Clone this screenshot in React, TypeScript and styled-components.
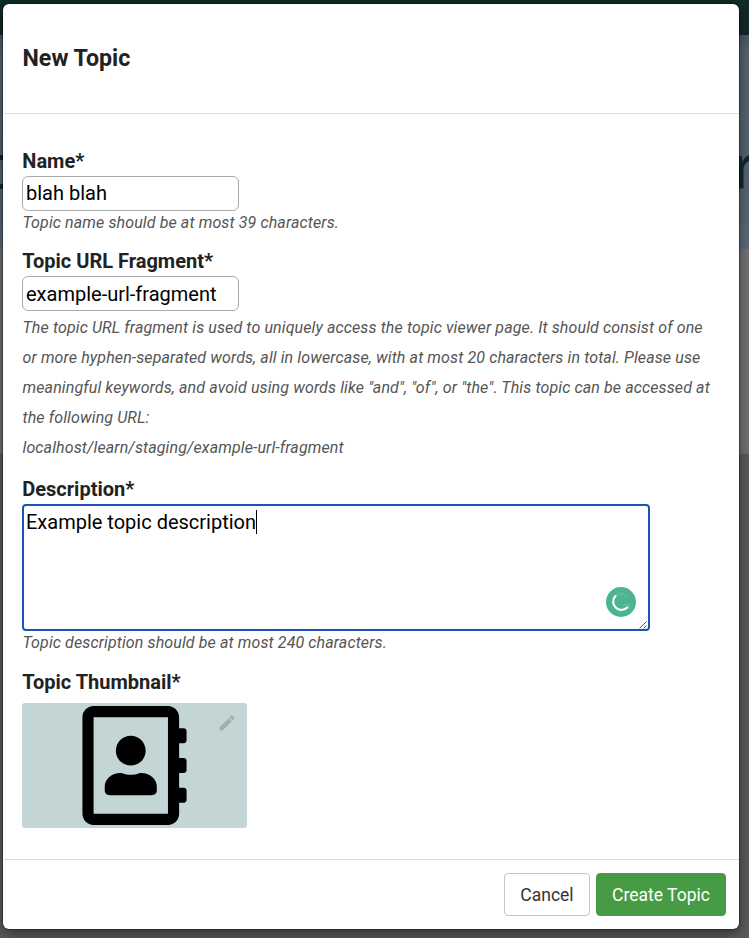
import React from "react";
import styled, { createGlobalStyle } from "styled-components";
import { FaRegAddressBook } from "react-icons/fa";
import { MdEdit } from "react-icons/md";

const GlobalStyle = createGlobalStyle`
  * { box-sizing: border-box; }
  body { margin: 0; font-family: Roboto, "Liberation Sans", sans-serif; color: #222; overflow: hidden; }
`;

const Page = styled.div`
  position: relative;
  height: 938px;
  overflow: hidden;
  background: #5f5d5b;
`;

const Backdrop = styled.div`
  position: absolute;
  inset: 0;
  display: flex;
  flex-direction: column;
`;

const NavStrip = styled.div`
  height: 35px;
  background: #102b29;
`;

const Hero = styled.div`
  height: 214px;
  padding-top: 120px;
  display: flex;
  justify-content: space-between;
  align-items: flex-start;
  background: linear-gradient(#4c5761, #5a6670 8%, #586570 60%, #5e6c7b);
`;

const HeroGlyph = styled.svg`
  display: block;
  width: 12px;
  height: 34px;
`;

const ContentBand = styled.div`
  height: 205px;
  background: #747474;
`;

const Dialog = styled.div`
  position: relative;
  display: flex;
  flex-direction: column;
  width: 736px;
  height: 925px;
  margin: 4px 0 0 3px;
  border-radius: 6px;
  background: #fff;
  box-shadow: 0 0 0 1px rgba(0, 0, 0, 0.3), 0 5px 15px rgba(0, 0, 0, 0.5);
  float: left;
`;

const Header = styled.header`
  height: 110px;
  margin-left: 1px;
  padding: 38px 18.5px 0;
  border-bottom: 1px solid #dddedd;
`;

const Title = styled.h1`
  margin: 0;
  font-size: 23.2px;
  line-height: 32px;
  font-weight: 700;
`;

const Body = styled.main`
  flex: 1;
  padding: 35px 19px 0;
`;

const Field = styled.section<{ $height: number }>`
  height: ${(p) => p.$height}px;
`;

const Label = styled.label`
  display: block;
  height: 27px;
  padding-left: 0.3px;
  font-size: 20px;
  line-height: 25px;
  font-weight: 700;
`;

const TextInput = styled.input<{ $lift?: boolean }>`
  display: block;
  width: 217px;
  height: 35px;
  padding: 0 3px ${(p) => (p.$lift ? 2 : 0)}px;
  border: 1px solid #aaa;
  border-radius: 6px;
  outline: none;
  background: #fff;
  color: #000;
  font: 400 20px Roboto, sans-serif;
`;

const Hint = styled.p<{ $line?: number; $top?: number }>`
  margin: ${(p) => p.$top ?? 0}px 0 0 0.5px;
  font-size: 16px;
  line-height: ${(p) => p.$line ?? 24}px;
  font-style: italic;
  letter-spacing: 0.115px;
  color: #555;
  white-space: nowrap;
`;

const TextArea = styled.div`
  position: relative;
  width: 628px;
  height: 127px;
  padding: 4px 2px;
  display: flex;
  align-items: flex-start;
  border: 2px solid #1f51b9;
  border-radius: 4px;
  color: #000;
  font-size: 20px;
  line-height: 24px;
`;

const Caret = styled.span`
  width: 1px;
  height: 24px;
  background: #000;
`;

const AssistantBadge = styled.svg`
  position: absolute;
  right: 12px;
  bottom: 12px;
  width: 30px;
  height: 30px;
`;

const ResizeGrip = styled.svg`
  position: absolute;
  right: 1px;
  bottom: 0;
  width: 8px;
  height: 9px;
`;

const Thumbnail = styled.div`
  position: relative;
  width: 225px;
  height: 125px;
  margin-top: 6px;
  display: flex;
  justify-content: center;
  align-items: center;
  border-radius: 3px;
  background: #c3d5d4;
  color: #000;
`;

const BookIcon = styled(FaRegAddressBook)`
  width: 105px;
  height: 119px;
`;

const EditIcon = styled(MdEdit)`
  position: absolute;
  top: 10px;
  right: 10px;
  width: 20px;
  height: 20px;
  color: #a0b0af;
`;

const Footer = styled.footer`
  display: flex;
  justify-content: flex-end;
  gap: 6px;
  height: 70px;
  margin-left: 1px;
  padding: 13px 13px 0;
  border-top: 1px solid #dddddf;
`;

const Button = styled.button<{ $primary?: boolean }>`
  width: ${(p) => (p.$primary ? 130 : 86)}px;
  height: 43px;
  padding: 1px 0 0;
  border: 1px solid ${(p) => (p.$primary ? "#489b45" : "#c4c4c4")};
  border-radius: 4px;
  background: ${(p) => (p.$primary ? "#489b45" : "#fff")};
  color: ${(p) => (p.$primary ? "#fff" : "#333")};
  font: 400 17.5px Roboto, sans-serif;
`;

export default function App() {
  return (
    <Page>
      <GlobalStyle />
      <Backdrop>
        <NavStrip />
        <Hero>
          <HeroGlyph viewBox="0 0 12 34">
            <path d="M0 0h12v5H0zM0 29h12v5H0z" fill="#102b29" />
          </HeroGlyph>
          <HeroGlyph viewBox="0 0 12 34">
            <path d="M0 1h4.500l1 6Q8 1.500 12 0v6Q7.500 8 6.500 13v20.500H0z" fill="#102b29" />
          </HeroGlyph>
        </Hero>
        <ContentBand />
      </Backdrop>
      <Dialog>
        <Header>
          <Title>New Topic</Title>
        </Header>
        <Body>
          <Field $height={100}>
            <Label>Name*</Label>
            <TextInput $lift defaultValue="blah blah" />
            <Hint>Topic name should be at most 39 characters.</Hint>
          </Field>
          <Field $height={228}>
            <Label>Topic URL Fragment*</Label>
            <TextInput defaultValue="example-url-fragment" />
            <Hint $line={30} $top={2}>
              The topic URL fragment is used to uniquely access the topic viewer page. It should consist of one<br />
              or more hyphen-separated words, all in lowercase, with at most 20 characters in total. Please use<br />
              meaningful keywords, and avoid using words like "and", "of", or "the". This topic can be accessed at<br />
              the following URL:<br />
              localhost/learn/staging/example-url-fragment
            </Hint>
          </Field>
          <Field $height={193}>
            <Label>Description*</Label>
            <TextArea>
              <span>Example topic description</span>
              <Caret />
              <AssistantBadge viewBox="0 0 30 30">
                <circle cx="15" cy="15" r="15" fill="#4db491" />
                <path d="M9.500 9A8.300 8.300 0 0 1 21.500 10M17 18h6v4" stroke="#63bd9e" strokeWidth="1.6" fill="none" />
                <path d="M9.500 9A8.200 8.200 0 0 0 21.200 20.500" stroke="#fff" strokeWidth="2.1" strokeLinecap="round" fill="none" />
              </AssistantBadge>
              <ResizeGrip viewBox="0 0 8 9">
                <path d="M.5 8.5l7-7M4.5 8.5l3-3" stroke="#555" strokeWidth="1" />
              </ResizeGrip>
            </TextArea>
            <Hint>Topic description should be at most 240 characters.</Hint>
          </Field>
          <Field $height={154}>
            <Label>Topic Thumbnail*</Label>
            <Thumbnail>
              <BookIcon />
              <EditIcon />
            </Thumbnail>
          </Field>
        </Body>
        <Footer>
          <Button>Cancel</Button>
          <Button $primary>Create Topic</Button>
        </Footer>
      </Dialog>
    </Page>
  );
}
